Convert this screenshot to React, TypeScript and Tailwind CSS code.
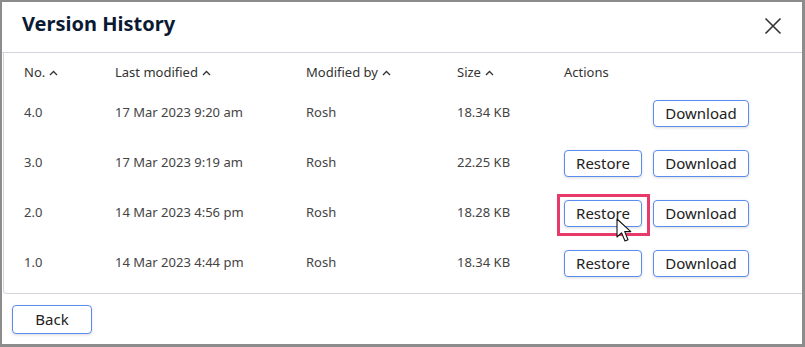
import React from "react";

const rows = [
  { no: "4.0", date: "17 Mar 2023 9:20 am", by: "Rosh", size: "18.34 KB", restore: false },
  { no: "3.0", date: "17 Mar 2023 9:19 am", by: "Rosh", size: "22.25 KB", restore: true },
  { no: "2.0", date: "14 Mar 2023 4:56 pm", by: "Rosh", size: "18.28 KB", restore: true, hl: true },
  { no: "1.0", date: "14 Mar 2023 4:44 pm", by: "Rosh", size: "18.34 KB", restore: true },
];

function Caret() {
  return (
    <svg width="9" height="6" viewBox="0 0 9 6" className="ml-[4px] inline-block" fill="none">
      <path d="M1 5L4.5 1.5L8 5" stroke="#333" strokeWidth="1.3" />
    </svg>
  );
}

function Btn({ children, w, h = "h-[27px]" }: { children: React.ReactNode; w: string; h?: string }) {
  return (
    <button
      className={`${w} ${h} rounded-[4px] border border-[#5b8def] bg-white text-[15px] text-[#222] shadow-[0_1px_3px_rgba(0,0,0,0.15)] flex items-center justify-center`}
    >
      {children}
    </button>
  );
}

export default function App() {
  return (
    <div
      className="w-[805px] h-[347px] bg-[#8c8c8c] pt-[2px] pl-[2px] pr-[3px] pb-[3px]"
      style={{ fontFamily: '"Noto Sans", "Open Sans", sans-serif' }}
    >
      <div className="w-full h-full bg-white flex flex-col">
        <div className="h-[51px] flex items-center justify-between pl-[20px] pr-[20px] border-b border-[#d4d4dc]">
          <h1 className="text-[20px] font-bold text-[#0b1a33] leading-none mb-[6px]">Version History</h1>
          <svg width="18" height="18" viewBox="0 0 18 18" className="mb-[2px]">
            <path d="M1.5 1.5L16.5 16.5M16.5 1.5L1.5 16.5" stroke="#333" strokeWidth="1.6" />
          </svg>
        </div>
        <div className="h-[241px] border-l border-b border-[#d4d4dc] rounded-bl-[4px] ml-[1px] text-[13px] text-[#444]">
          <div className="h-[35px] flex items-center pt-[4px] text-[#333]">
            <div className="w-[111px] pl-[20px] flex items-center">No.<Caret /></div>
            <div className="w-[191px] flex items-center">Last modified<Caret /></div>
            <div className="w-[151px] flex items-center">Modified by<Caret /></div>
            <div className="w-[107px] flex items-center">Size<Caret /></div>
            <div>Actions</div>
          </div>
          {rows.map((r) => (
            <div key={r.no} className="h-[50px] flex items-center">
              <div className="w-[111px] pl-[20px]">{r.no}</div>
              <div className="w-[191px]">{r.date}</div>
              <div className="w-[151px]">{r.by}</div>
              <div className="w-[107px]">{r.size}</div>
              <div className="flex items-center gap-[11px]">
                {r.restore ? (
                  r.hl ? (
                    <div className="relative">
                      <Btn w="w-[78px]">Restore</Btn>
                      <div className="absolute left-[-7px] top-[-6px] w-[93px] h-[42px] border-[3px] border-[#e8396b] pointer-events-none" />
                      <svg
                        width="18"
                        height="26"
                        viewBox="0 0 18 26"
                        className="absolute left-[52px] top-[18px]"
                      >
                        <path
                          d="M1 1L1 19L5.5 14.8L9 23L12 21.7L8.7 13.6L14.8 13.6Z"
                          fill="white"
                          stroke="#111"
                          strokeWidth="1.1"
                          strokeLinejoin="round"
                        />
                      </svg>
                    </div>
                  ) : (
                    <Btn w="w-[78px]">Restore</Btn>
                  )
                ) : (
                  <div className="w-[78px]" />
                )}
                <Btn w="w-[96px]">Download</Btn>
              </div>
            </div>
          ))}
        </div>
        <div className="flex-1 flex items-center pl-[10px]">
          <Btn w="w-[80px]" h="h-[29px]">Back</Btn>
        </div>
      </div>
    </div>
  );
}
